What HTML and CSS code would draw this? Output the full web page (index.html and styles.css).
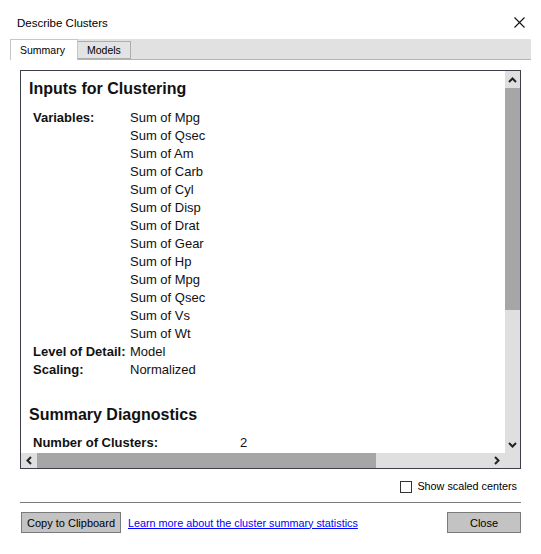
FILE: index.html
```html
<!DOCTYPE html>
<html>
<head>
<meta charset="utf-8">
<link rel="stylesheet" href="styles.css">
</head>
<body>
<div class="dialog">
  <div class="titlebar">
    <span class="title">Describe Clusters</span>
    <svg class="close-x" width="11" height="11" viewBox="0 0 11 11"><path d="M0.5 0.5 L10.5 10.5 M10.5 0.5 L0.5 10.5" stroke="#111" stroke-width="1.1" fill="none"/></svg>
  </div>
  <div class="tabs">
    <div class="tab tab-active">Summary</div>
    <div class="tab tab-inactive">Models</div>
  </div>
  <div class="panel">
    <div class="viewport">
      <h2 class="heading">Inputs for Clustering</h2>
      <div class="info">
        <div class="label">Variables:</div>
        <div class="values">
          <div>Sum of Mpg</div>
          <div>Sum of Qsec</div>
          <div>Sum of Am</div>
          <div>Sum of Carb</div>
          <div>Sum of Cyl</div>
          <div>Sum of Disp</div>
          <div>Sum of Drat</div>
          <div>Sum of Gear</div>
          <div>Sum of Hp</div>
          <div>Sum of Mpg</div>
          <div>Sum of Qsec</div>
          <div>Sum of Vs</div>
          <div>Sum of Wt</div>
        </div>
        <div class="label">Level of Detail:</div>
        <div class="values"><div>Model</div></div>
        <div class="label">Scaling:</div>
        <div class="values"><div>Normalized</div></div>
      </div>
      <h2 class="heading heading-2">Summary Diagnostics</h2>
      <div class="diag">
        <div class="label">Number of Clusters:</div>
        <div class="diag-value">2</div>
      </div>
    </div>
    <div class="vscroll">
      <div class="sbtn sbtn-v">
        <svg width="9" height="6" viewBox="0 0 9 6"><path d="M1 5 L4.5 1.5 L8 5" stroke="#222" stroke-width="2" fill="none"/></svg>
      </div>
      <div class="vthumb"></div>
      <div class="vtrack"></div>
      <div class="sbtn sbtn-v">
        <svg width="9" height="6" viewBox="0 0 9 6"><path d="M1 1 L4.5 4.5 L8 1" stroke="#222" stroke-width="2" fill="none"/></svg>
      </div>
    </div>
    <div class="hscroll">
      <div class="sbtn sbtn-h">
        <svg width="6" height="9" viewBox="0 0 6 9"><path d="M5 1 L1.5 4.5 L5 8" stroke="#222" stroke-width="2" fill="none"/></svg>
      </div>
      <div class="hthumb"></div>
      <div class="htrack"></div>
      <div class="sbtn sbtn-h">
        <svg width="6" height="9" viewBox="0 0 6 9"><path d="M1 1 L4.5 4.5 L1 8" stroke="#222" stroke-width="2" fill="none"/></svg>
      </div>
    </div>
    <div class="corner"></div>
  </div>
  <div class="check-row">
    <span class="checkbox"></span>
    <span class="check-label">Show scaled centers</span>
  </div>
  <div class="separator"></div>
  <div class="button-row">
    <div class="btn btn-copy">Copy to Clipboard</div>
    <a class="link" href="#">Learn more about the cluster summary statistics</a>
    <div class="btn btn-close">Close</div>
  </div>
</div>
</body>
</html>
```
FILE: styles.css
```css
html, body {
  margin: 0;
  padding: 0;
  background: #ffffff;
}
body {
  font-family: "Liberation Sans", Arial, sans-serif;
  color: #111;
}
.dialog {
  width: 541px;
  height: 554px;
  display: flex;
  flex-direction: column;
}
.titlebar {
  height: 39px;
  box-sizing: border-box;
  padding: 15px 16px 0 17px;
  display: flex;
  justify-content: space-between;
  align-items: flex-start;
}
.title {
  font-size: 11.5px;
  line-height: 16px;
  color: #000;
}
.close-x {
  margin-top: 2px;
}
.tabs {
  margin: 0 10px;
  height: 20px;
  background: #e1e1e1;
  border-bottom: 1px solid #b4b4b4;
  display: flex;
  align-items: flex-start;
}
.tab {
  font-size: 10.5px;
  color: #000;
  box-sizing: border-box;
}
.tab-active {
  width: 68px;
  height: 21px;
  background: #fff;
  border: 1px solid #c6c6c6;
  border-bottom: none;
  padding-left: 9px;
  line-height: 20px;
}
.tab-inactive {
  margin-top: 2px;
  width: 53px;
  height: 18px;
  background: #e3e3e3;
  border: 1px solid #adadad;
  border-left: none;
  padding-left: 9px;
  line-height: 17px;
}
.panel {
  margin: 10px 20px 0 20px;
  height: 399px;
  box-sizing: border-box;
  border: 1px solid #3e3e48;
  display: grid;
  grid-template-columns: 1fr 15px;
  grid-template-rows: 1fr 15px;
}
.viewport {
  overflow: hidden;
  padding-top: 8px;
}
.heading {
  margin: 0;
  padding-left: 8px;
  font-size: 16px;
  line-height: 20px;
  font-weight: bold;
  color: #111;
}
.heading-2 {
  margin-top: 26px;
}
.info {
  margin-top: 10px;
  padding-left: 12px;
  display: grid;
  grid-template-columns: 97px 1fr;
  font-size: 13px;
  line-height: 18px;
}
.label {
  font-weight: bold;
}
.diag {
  margin-top: 9px;
  padding-left: 12px;
  display: grid;
  grid-template-columns: 207px 1fr;
  font-size: 13px;
  line-height: 18px;
}
.vscroll {
  background: #dfdfdf;
  display: flex;
  flex-direction: column;
}
.sbtn {
  display: flex;
  align-items: center;
  justify-content: center;
  background: #dfdfdf;
}
.sbtn-v {
  height: 17px;
}
.vthumb {
  height: 222px;
  background: #a6a6a6;
}
.vtrack {
  flex: 1;
}
.hscroll {
  background: #dfdfdf;
  display: flex;
}
.sbtn-h {
  width: 16px;
}
.hthumb {
  width: 339px;
  background: #a6a6a6;
}
.htrack {
  flex: 1;
}
.corner {
  background: #dfdfdf;
}
.check-row {
  margin-top: 11px;
  padding-right: 24px;
  height: 13px;
  display: flex;
  justify-content: flex-end;
  align-items: center;
}
.checkbox {
  width: 12px;
  height: 12px;
  box-sizing: border-box;
  border: 1px solid #333;
  background: #fff;
  margin-right: 5px;
}
.check-label {
  font-size: 10.8px;
  line-height: 13px;
  color: #000;
}
.separator {
  margin: 9px 20px 0 20px;
  height: 1px;
  background: #7a7a7a;
}
.button-row {
  margin-top: 9px;
  padding: 0 20px 0 21px;
  display: flex;
  align-items: center;
  height: 21px;
}
.btn {
  height: 21px;
  box-sizing: border-box;
  border: 1px solid #7a7a7a;
  background: #c3c3c3;
  font-size: 11px;
  padding-top: 1px;
  line-height: 18px;
  text-align: center;
  color: #000;
}
.btn-copy {
  width: 100px;
}
.link {
  margin-left: 7px;
  font-size: 10.8px;
  color: #0000ff;
  text-decoration: underline;
}
.btn-close {
  margin-left: auto;
  width: 74px;
}
```
